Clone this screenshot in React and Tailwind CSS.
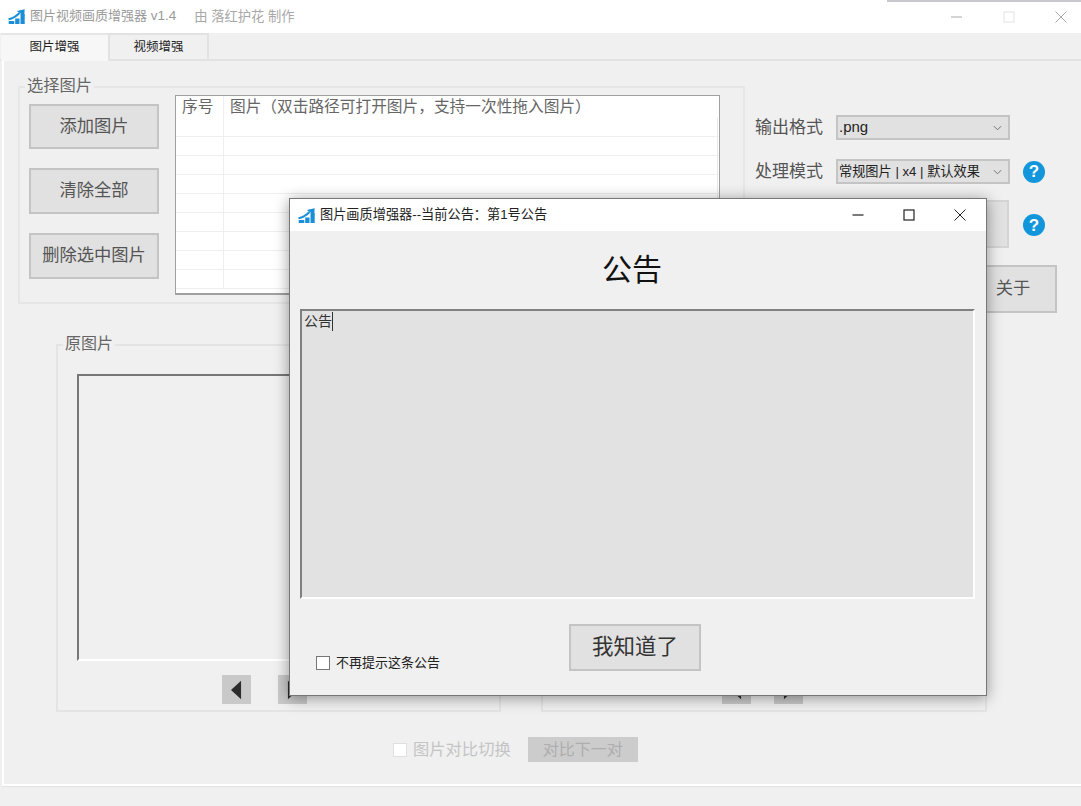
const Logo = ({ className }) => (
  <svg viewBox="0 0 17 15" className={className}>
    <rect x="0.7" y="12" width="5.6" height="3" fill="#1a8fd8" />
    <rect x="7.2" y="9.5" width="4.3" height="5.5" fill="#1a8fd8" />
    <rect x="12.5" y="5" width="4.2" height="10" fill="#1a8fd8" />
    <path d="M0.5 10.2 Q6.5 9.2 11.5 4" stroke="#1a8fd8" strokeWidth="2" fill="none" />
    <path d="M8.8 2 L16.7 0.3 L16.2 7 Z" fill="#1a8fd8" />
  </svg>
);

const Help = () => (
  <div className="w-[22px] h-[22px] rounded-full bg-[#1296db] text-white flex items-center justify-center text-[17px] font-bold leading-none shrink-0">?</div>
);

const Btn = ({ children, className = "" }) => (
  <div className={`bg-[#e1e1e1] border-2 border-[#c4c4c4] flex items-center justify-center text-[17.3px] text-[#555] ${className}`}>{children}</div>
);

const Select = ({ children, className = "" }) => (
  <div className={`w-[174px] h-[25px] bg-[#e1e1e1] border-2 border-[#c4c4c4] flex items-center justify-between pl-[1px] pr-[6px] text-[#222] ${className}`}>
    <span className="truncate">{children}</span>
    <svg viewBox="0 0 10 6" className="w-[9px] h-[6px] shrink-0"><path d="M1 1 L5 5 L9 1" stroke="#666" strokeWidth="1" fill="none" /></svg>
  </div>
);

const Nav = ({ dir }) => (
  <div className="w-[29px] h-[29px] bg-[#c9c9c9] flex items-center justify-center">
    <svg viewBox="0 0 12 20" className="w-[11px] h-[20px]">
      <path d={dir === "l" ? "M11 0 V20 L0 10 Z" : "M1 0 V20 L12 10 Z"} fill="#2c2c2c" />
    </svg>
  </div>
);

const ImageGroup = ({ title, className = "", left, right }) => (
  <div className={`relative border-2 border-[#e4e4e4] ${className}`}>
    {title && <span className="absolute left-[5px] -top-[12px] px-[2px] bg-[#f0f0f0] text-[16px] leading-[20px] text-[#666]">{title}</span>}
    <div className="mt-[28px] ml-[19px] mr-[20px] h-[287px] border-2 border-t-[#777] border-l-[#777] border-b-white border-r-white" />
    <div className="mt-[14px] flex" style={{ marginLeft: left, columnGap: right }}>
      <Nav dir="l" />
      <Nav dir="r" />
    </div>
  </div>
);

export default function App() {
  const rows = Array.from({ length: 9 });
  return (
    <div className="relative w-[1081px] h-[806px] overflow-hidden bg-[#f0f0f0] text-[#333]" style={{ fontFamily: '"Liberation Sans", "Noto Sans CJK SC", sans-serif' }}>
      <div className="absolute right-0 top-0 w-[194px] h-[2px] bg-[#c8c8cc]" />

      {/* title bar */}
      <div className="h-[33px] bg-white flex items-center pl-[8px] pr-[12px]">
        <Logo className="w-[17px] h-[15px] mr-[5px]" />
        <span className="text-[13px] text-[#9a9a9a] whitespace-pre">图片视频画质增强器 <span className="text-[13.5px]">v1.4</span></span>
        <span className="text-[13.3px] text-[#a8a8a8] ml-[18px] whitespace-pre">由 落红护花 制作</span>
        <div className="ml-auto flex items-center gap-[40px] pr-[2px]">
          <svg viewBox="0 0 12 12" className="w-[12px] h-[12px]"><path d="M0 6 H11" stroke="#aaa" strokeWidth="1" /></svg>
          <svg viewBox="0 0 12 12" className="w-[12px] h-[12px]"><rect x="1" y="1" width="10" height="10" stroke="#e4e4e4" strokeWidth="1" fill="none" /></svg>
          <svg viewBox="0 0 12 12" className="w-[12px] h-[12px]"><path d="M0.5 0.5 L11.5 11.5 M11.5 0.5 L0.5 11.5" stroke="#aaa" strokeWidth="1" fill="none" /></svg>
        </div>
      </div>

      {/* tabs */}
      <div className="h-[28px] flex items-end pl-[1px] border-b-2 border-[#e2e2e2] relative z-0">
        <div className="w-[107px] h-[28px] -mb-[2px] pb-[2px] bg-[#f7f7f7] border-t-2 border-[#e6e6e6] flex items-center justify-center text-[12.5px] text-[#222] relative z-10">图片增强</div>
        <div className="w-[101px] h-[26px] pt-[1px] border-2 border-b-0 border-[#e2e2e2] flex items-center justify-center text-[12.5px] text-[#222]">视频增强</div>
      </div>

      {/* tab panel */}
      <div className="ml-[2px] h-[725px] border-l-2 border-b-2 border-white pl-[14px] pt-[25px] shadow-[0_1px_0_#e4e4e4]">
        <div className="flex">
          {/* select group */}
          <div className="relative w-[727px] h-[218px] border-2 border-[#e6e6e6] flex pl-[9px] pt-[7px]">
            <span className="absolute left-[5px] -top-[13px] px-[2px] bg-[#f0f0f0] text-[16.3px] leading-[20px] text-[#666]">选择图片</span>
            <div className="flex flex-col w-[130px] mt-[9px]">
              <Btn className="h-[45px]">添加图片</Btn>
              <Btn className="h-[46px] mt-[19px]">清除全部</Btn>
              <Btn className="h-[46px] mt-[19px]">删除选中图片</Btn>
            </div>
            <div className="ml-[16px] w-[545px] h-[200px] bg-white border border-[#a0a0a0] border-b-2 relative overflow-hidden">
              <div className="flex h-[22px] text-[15.7px] leading-[21px] text-[#666]">
                <div className="w-[48px] pl-[6px] border-r border-[#f0f0f0]">序号</div>
                <div className="pl-[6px] whitespace-nowrap">图片（双击路径可打开图片，支持一次性拖入图片）</div>
              </div>
              {rows.map((_, i) => (
                <div key={i} className="flex h-[19px] border-b border-[#efefef]">
                  <div className="w-[48px] border-r border-[#efefef]" />
                  <div className="flex-1" />
                  <div className="w-[2px] border-l border-[#e8e8e8]" />
                </div>
              ))}
            </div>
          </div>

          {/* right column */}
          <div className="ml-[10px] mt-[29px] text-[17px] text-[#555]">
            <div className="flex items-center h-[25px]">
              <span className="w-[81px] whitespace-nowrap">输出格式</span>
              <Select className="text-[15px]">.png</Select>
            </div>
            <div className="flex items-center h-[25px] mt-[19px]">
              <span className="w-[81px] whitespace-nowrap">处理模式</span>
              <Select className="text-[13.2px]">常规图片 | x4 | 默认效果</Select>
              <div className="ml-[13px]"><Help /></div>
            </div>
            <div className="flex items-center h-[48px] mt-[16px]">
              <div className="ml-[81px] w-[173px] h-[48px] bg-[#e1e1e1] border-2 border-[#d4d4d4]" />
              <div className="ml-[14px] mt-[2px]"><Help /></div>
            </div>
            <div className="flex justify-end mt-[17px] -mr-[12px]">
              <Btn className="w-[120px] h-[48px] pl-[32px] whitespace-nowrap">关于</Btn>
            </div>
          </div>
        </div>

        {/* image groups */}
        <div className="flex mt-[31px] ml-[38px]">
          <ImageGroup title="原图片" className="w-[445px] h-[368px]" left="164px" right="27px" />
          <ImageGroup className="ml-[40px] w-[446px] h-[368px]" left="179px" right="23px" />
        </div>

        {/* compare row */}
        <div className="flex items-center mt-[25px] ml-[375px]">
          <div className="w-[14px] h-[14px] bg-white border border-[#e0e0e0]" />
          <span className="ml-[6px] text-[16.3px] text-[#c4c4c4] whitespace-nowrap">图片对比切换</span>
          <div className="ml-[17px] w-[110px] h-[25px] bg-[#cccccc] flex items-center justify-center text-[16px] text-[#aeaeae]">对比下一对</div>
        </div>
      </div>

      {/* dialog */}
      <div className="absolute left-[289px] top-[198px] w-[698px] h-[498px] bg-[#f0f0f0] border border-[#777] shadow-[0_2px_14px_rgba(0,0,0,0.4)] flex flex-col">
        <div className="h-[32px] bg-white flex items-center pl-[8px] shrink-0">
          <Logo className="w-[17px] h-[15px] mr-[5px]" />
          <span className="text-[13.2px] text-[#222] whitespace-nowrap">图片画质增强器--当前公告：第1号公告</span>
          <div className="ml-auto flex items-center gap-[39px] pr-[20px]">
            <svg viewBox="0 0 12 12" className="w-[12px] h-[12px]"><path d="M0.5 6 H11.5" stroke="#222" strokeWidth="1.2" /></svg>
            <svg viewBox="0 0 12 12" className="w-[12px] h-[12px]"><rect x="1" y="1" width="10" height="10" stroke="#222" strokeWidth="1.2" fill="none" /></svg>
            <svg viewBox="0 0 12 12" className="w-[12px] h-[12px]"><path d="M0.5 0.5 L11.5 11.5 M11.5 0.5 L0.5 11.5" stroke="#222" strokeWidth="1" fill="none" /></svg>
          </div>
        </div>
        <div className="h-[76px] mb-[2px] pr-[12px] flex items-center justify-center text-[30px] text-[#111] shrink-0">公告</div>
        <div className="ml-[10px] w-[675px] h-[290px] bg-[#e2e2e2] border-2 border-t-[#808080] border-l-[#808080] border-b-white border-r-white text-[14px] leading-[20px] text-[#333] pl-[2px] flex items-start shrink-0">
          <span>公告</span><span className="w-px h-[19px] bg-[#333] mt-[1px]" />
        </div>
        <div className="flex mt-[25px] pl-[26px]">
          <div className="flex items-center mt-[32px] h-[14px]">
            <div className="w-[14px] h-[14px] bg-white border border-[#777]" />
            <span className="ml-[6px] text-[13px] text-[#222] whitespace-nowrap">不再提示这条公告</span>
          </div>
          <Btn className="ml-[129px] w-[132px] h-[47px] !text-[21.5px] !text-[#333]">我知道了</Btn>
        </div>
      </div>
    </div>
  );
}
